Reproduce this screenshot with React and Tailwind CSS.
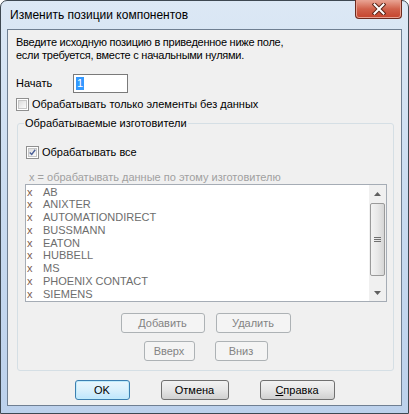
import React from 'react';

const ui = { fontFamily: '"Liberation Sans", Arial, sans-serif' };

function CheckBox({ checked }) {
  return (
    <div className="w-[13px] h-[13px] border border-[#8f8f8f] bg-white p-[1px] shrink-0">
      <div className="w-full h-full border border-[#c6c6c6] bg-gradient-to-br from-[#dcdcdc] to-[#fbfbfb] flex items-center justify-center">
        {checked && (
          <svg width="9" height="9" viewBox="0 0 9 9">
            <path d="M1 4.5 L3.5 7 L8 1" fill="none" stroke="#4a5f97" strokeWidth="1.8" />
          </svg>
        )}
      </div>
    </div>
  );
}

function Btn({ children, w, disabled, primary }) {
  let cls = 'border-[#707070] bg-gradient-to-b from-[#f2f2f2] via-[#e6e6e6] to-[#d0d0d0] text-black';
  if (disabled) cls = 'border-[#adb2b5] bg-[#f4f4f4] text-[#838383]';
  if (primary) cls = 'border-[#3c7fb1] bg-gradient-to-b from-[#eaf6fd] via-[#d9f0fc] to-[#bee6fd] text-black shadow-[inset_0_0_0_1px_#c0ebfb]';
  return (
    <div className={`h-[20px] ${w} rounded-[3px] border flex items-center justify-center text-[11px] leading-none ${cls}`}>
      {children}
    </div>
  );
}

const vendors = ['AB', 'ANIXTER', 'AUTOMATIONDIRECT', 'BUSSMANN', 'EATON', 'HUBBELL', 'MS', 'PHOENIX CONTACT', 'SIEMENS'];

export default function App() {
  return (
    <div className="w-[409px] h-[414px] bg-white">
      <div className="w-[409px] h-[414px] border border-[#3e4852] rounded-t-[7px] bg-gradient-to-b from-[#dce8f5] via-[#c9dbf0] to-[#bcd1ec] px-[6px] pb-[7px] flex flex-col">
        {/* title bar */}
        <div className="h-[28px] flex items-start justify-between shrink-0">
          <div className="pt-[6px] pl-[3px] text-[12px] leading-[16px] text-black" style={ui}>
            Изменить позиции компонентов
          </div>
          <div className="w-[47px] h-[19px] -mt-[1px] rounded-b-[4px] border border-[#6d2a1e] border-t-0 bg-gradient-to-b from-[#e9a595] via-[#d0614b] to-[#c5432c] flex items-center justify-center shadow-[inset_0_0_0_1px_#e8a090]">
            <svg width="14" height="12" viewBox="0 0 14 12">
              <path d="M2.5 1.5 L11.5 10.5 M11.5 1.5 L2.5 10.5" stroke="#5a2418" strokeWidth="4" strokeLinecap="square" />
              <path d="M2.5 1.5 L11.5 10.5 M11.5 1.5 L2.5 10.5" stroke="#ffffff" strokeWidth="2" strokeLinecap="square" />
            </svg>
          </div>
        </div>

        {/* client area */}
        <div className="flex-1 border border-[#6f7f92] bg-[#f0f0f0] flex flex-col text-[11px] text-black" style={ui}>
          <div className="pt-[6px] pl-[8px] leading-[13px] tracking-[-0.25px]">
            <div>Введите исходную позицию в приведенное ниже поле,</div>
            <div>если требуется, вместе с начальными нулями.</div>
          </div>

          <div className="mt-[12px] pl-[8px] flex items-center">
            <div className="w-[57px] leading-[13px]">Начать</div>
            <div className="w-[55px] h-[19px] border border-[#7a7a7a] bg-white flex items-center pl-[2px]">
              <span className="bg-[#3399ff] text-white leading-[13px] px-[1px]">1</span>
            </div>
          </div>

          <div className="mt-[5px] pl-[8px] flex items-center gap-[3px]">
            <CheckBox />
            <span className="leading-[13px]">Обрабатывать только элементы без данных</span>
          </div>

          <fieldset className="mt-[6px] ml-[9px] mr-[7px] border border-[#d5dfe5] rounded-[3px] px-0 pb-[9px] pt-0 m-0 min-w-0">
            <legend className="ml-[6px] px-[1px] leading-[13px]">Обрабатываемые изготовители</legend>

            <div className="mt-[16px] pl-[8px] flex items-center gap-[3px]">
              <CheckBox checked />
              <span className="leading-[13px]">Обрабатывать все</span>
            </div>

            <div className="mt-[12px] pl-[11px] leading-[13px] text-[#a0a0a0]">x = обрабатывать данные по этому изготовителю</div>

            <div className="ml-[7px] w-[362px] h-[118px] border border-[#a5acb5] bg-white flex overflow-hidden">
              <div className="flex-1 pt-[0.5px]">
                {vendors.map((v) => (
                  <div key={v} className="h-[12.8px] leading-[12.8px] flex text-[#6d6d6d]">
                    <span className="w-[17px] pl-[1px] text-[#7b5a4f]">x</span>
                    <span>{v}</span>
                  </div>
                ))}
              </div>
              <div className="w-[17px] bg-[#f0f0f0] flex flex-col items-center">
                <div className="h-[17px] flex items-center justify-center">
                  <svg width="7" height="4" viewBox="0 0 7 4"><path d="M0 4 L3.5 0 L7 4 Z" fill="#606060" /></svg>
                </div>
                <div className="mt-[1px] w-[15px] h-[73px] rounded-[2px] border border-[#9a9a9a] bg-gradient-to-r from-[#f3f3f3] via-[#e8e8e8] to-[#d6d6d6] flex items-center justify-center">
                  <svg width="7" height="7" viewBox="0 0 7 7">
                    <path d="M0 1.5 H7 M0 3.5 H7 M0 5.5 H7" stroke="#707070" strokeWidth="1" />
                  </svg>
                </div>
                <div className="flex-1" />
                <div className="h-[17px] flex items-center justify-center">
                  <svg width="7" height="4" viewBox="0 0 7 4"><path d="M0 0 L3.5 4 L7 0 Z" fill="#606060" /></svg>
                </div>
              </div>
            </div>

            <div className="mt-[11px] flex justify-center gap-[11px]">
              <Btn w="w-[84px]" disabled>Добавить</Btn>
              <Btn w="w-[75px]" disabled>Удалить</Btn>
            </div>
            <div className="mt-[8px] flex justify-center gap-[20px]">
              <Btn w="w-[51px]" disabled>Вверх</Btn>
              <Btn w="w-[53px]" disabled>Вниз</Btn>
            </div>
          </fieldset>

          <div className="mt-[9px] flex justify-center gap-[31px]">
            <Btn w="w-[55px]" primary>OK</Btn>
            <Btn w="w-[68px]">Отмена</Btn>
            <Btn w="w-[75px]"><span><span className="underline">С</span>правка</span></Btn>
          </div>
        </div>
      </div>
    </div>
  );
}
